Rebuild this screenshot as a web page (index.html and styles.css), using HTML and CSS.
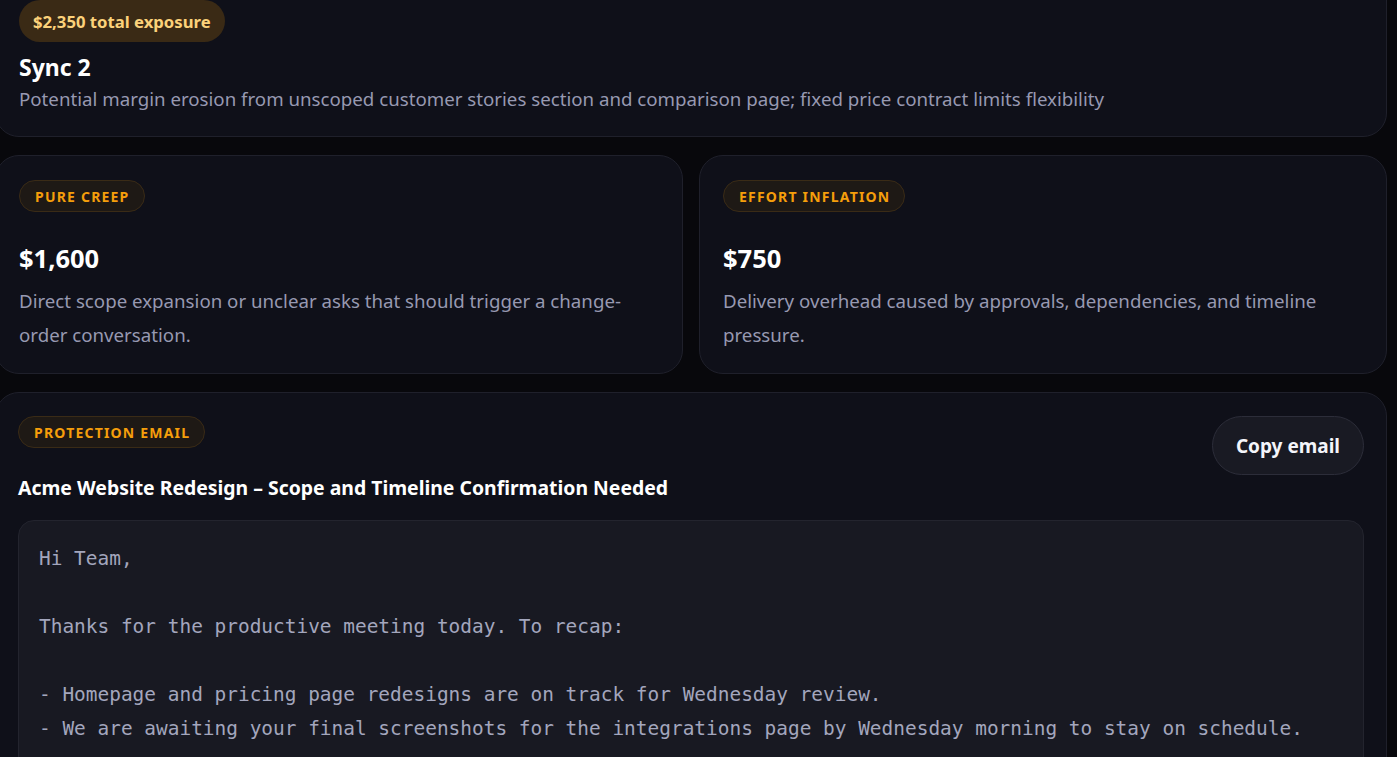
FILE: index.html
```html
<!DOCTYPE html>
<html lang="en">
<head>
<meta charset="utf-8">
<title>Scope exposure</title>
<link rel="stylesheet" href="styles.css">
</head>
<body>
<main class="page">
  <section class="card summary">
    <span class="pill exposure">$2,350 total exposure</span>
    <h2 class="summary-title">Sync 2</h2>
    <p class="muted summary-text">Potential margin erosion from unscoped customer stories section and comparison page; fixed price contract limits flexibility</p>
  </section>

  <div class="split">
    <section class="card metric">
      <span class="tag">Pure creep</span>
      <div class="amount">$1,600</div>
      <p class="muted metric-text">Direct scope expansion or unclear asks that should trigger a change-order conversation.</p>
    </section>
    <section class="card metric">
      <span class="tag">Effort inflation</span>
      <div class="amount">$750</div>
      <p class="muted metric-text">Delivery overhead caused by approvals, dependencies, and timeline pressure.</p>
    </section>
  </div>

  <section class="card email">
    <header class="email-head">
      <div class="email-heading">
        <span class="tag">Protection email</span>
        <h3 class="email-subject">Acme Website Redesign – Scope and Timeline Confirmation Needed</h3>
      </div>
      <button class="copy-btn" type="button">Copy email</button>
    </header>
    <pre class="email-body">Hi Team,

Thanks for the productive meeting today. To recap:

- Homepage and pricing page redesigns are on track for Wednesday review.
- We are awaiting your final screenshots for the integrations page by Wednesday morning to stay on schedule.

Best regards,</pre>
  </section>
</main>
</body>
</html>
```

FILE: styles.css
```css
* {
  box-sizing: border-box;
}

html, body {
  margin: 0;
  padding: 0;
  background: #08080c;
}

body {
  font-family: "Noto Sans", "Open Sans", sans-serif;
  color: #f4f5fa;
  overflow: hidden;
}

.page {
  width: 1392px;
  margin: -25px 0 0 -5px;
  display: flex;
  flex-direction: column;
  gap: 18px;
}

.card {
  background: #0f1019;
  border: 1px solid #1f202b;
  border-radius: 24px;
}

.summary {
  padding: 24px 23px 22px;
  display: flex;
  flex-direction: column;
  align-items: flex-start;
}

.pill {
  display: inline-flex;
  align-items: center;
  border-radius: 999px;
}

.exposure {
  height: 42px;
  padding: 0 14px;
  background: #3a2a15;
  color: #fcd27a;
  font-size: 16.7px;
  font-weight: 700;
}

.summary-title {
  margin: 10px 0 2px;
  font-size: 23px;
  line-height: 30px;
  font-weight: 700;
  color: #ffffff;
}

.muted {
  color: #9799b1;
  margin: 0;
}

.summary-text {
  font-size: 18.7px;
  line-height: 30px;
}

.split {
  display: grid;
  grid-template-columns: 1fr 1fr;
  gap: 16px;
}

.metric {
  padding: 24px 23px 21px;
  display: flex;
  flex-direction: column;
  align-items: flex-start;
}

.tag {
  display: inline-flex;
  align-items: center;
  height: 32px;
  padding: 0 14px 0 15px;
  border-radius: 999px;
  background: #1e1915;
  border: 1px solid #3a2b16;
  color: #f59e0b;
  font-size: 14px;
  font-weight: 700;
  letter-spacing: 1.2px;
  text-transform: uppercase;
}

.amount {
  margin-top: 30px;
  font-size: 25.5px;
  line-height: 32px;
  font-weight: 700;
  color: #ffffff;
}

.metric-text {
  margin-top: 10px;
  font-size: 18.7px;
  line-height: 34px;
}

.email {
  padding: 23px 22px 24px;
}

.email-head {
  display: flex;
  justify-content: space-between;
  align-items: flex-start;
}

.email-heading {
  display: flex;
  flex-direction: column;
  align-items: flex-start;
}

.email-subject {
  margin: 26px 0 0;
  font-size: 19.4px;
  line-height: 28px;
  font-weight: 700;
  color: #ffffff;
}

.copy-btn {
  height: 59px;
  padding: 0 23px;
  border-radius: 999px;
  background: #191a23;
  border: 1px solid #2c2d39;
  color: #f4f5fa;
  font-family: inherit;
  font-size: 19px;
  font-weight: 700;
}

.email-body {
  margin: 18px 0 0;
  padding: 21px 20px 20px;
  background: #181922;
  border: 1px solid #23242e;
  border-radius: 16px;
  font-family: "DejaVu Sans Mono", "Liberation Mono", monospace;
  font-size: 19.45px;
  line-height: 34px;
  color: #a3a6bd;
  white-space: pre-wrap;
}
```
